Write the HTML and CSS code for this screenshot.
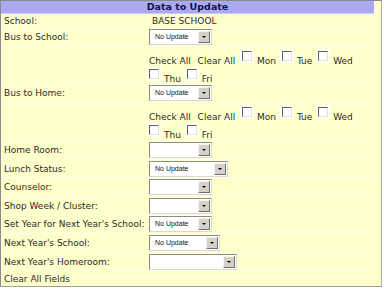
FILE: index.html
```html
<!DOCTYPE html>
<html lang="en">
<head>
  <meta charset="UTF-8">
  <title>Data to Update</title>
  <link rel="stylesheet" href="styles.css">
</head>
<body>
  <div class="panel">
    <table class="update-table">
      <tr class="head-row">
        <th colspan="2">Data to Update</th>
      </tr>
      <tr class="row-short">
        <td class="label">School:</td>
        <td class="value"><span class="plain">BASE SCHOOL</span></td>
      </tr>
      <tr>
        <td class="label">Bus to School:</td>
        <td class="value"><div class="dropdown w63"><span>No Update</span><i class="arrow"></i></div></td>
      </tr>
      <tr class="days-row">
        <td class="label"></td>
        <td class="value">
          <div class="days">
            <span class="link">Check All</span>
            <span class="link">Clear All</span>
            <span class="day"><b class="box"></b>Mon</span>
            <span class="day"><b class="box"></b>Tue</span>
            <span class="day"><b class="box"></b>Wed</span>
            <span class="day"><b class="box"></b>Thu</span>
            <span class="day"><b class="box"></b>Fri</span>
          </div>
        </td>
      </tr>
      <tr>
        <td class="label">Bus to Home:</td>
        <td class="value"><div class="dropdown w63"><span>No Update</span><i class="arrow"></i></div></td>
      </tr>
      <tr class="days-row">
        <td class="label"></td>
        <td class="value">
          <div class="days">
            <span class="link">Check All</span>
            <span class="link">Clear All</span>
            <span class="day"><b class="box"></b>Mon</span>
            <span class="day"><b class="box"></b>Tue</span>
            <span class="day"><b class="box"></b>Wed</span>
            <span class="day"><b class="box"></b>Thu</span>
            <span class="day"><b class="box"></b>Fri</span>
          </div>
        </td>
      </tr>
      <tr>
        <td class="label">Home Room:</td>
        <td class="value"><div class="dropdown w63"><span></span><i class="arrow"></i></div></td>
      </tr>
      <tr>
        <td class="label">Lunch Status:</td>
        <td class="value"><div class="dropdown w79"><span>No Update</span><i class="arrow"></i></div></td>
      </tr>
      <tr>
        <td class="label">Counselor:</td>
        <td class="value"><div class="dropdown w63"><span></span><i class="arrow"></i></div></td>
      </tr>
      <tr>
        <td class="label">Shop Week / Cluster:</td>
        <td class="value"><div class="dropdown w63"><span></span><i class="arrow"></i></div></td>
      </tr>
      <tr>
        <td class="label">Set Year for Next Year's School:</td>
        <td class="value"><div class="dropdown w63"><span>No Update</span><i class="arrow"></i></div></td>
      </tr>
      <tr>
        <td class="label">Next Year's School:</td>
        <td class="value"><div class="dropdown w71"><span>No Update</span><i class="arrow"></i></div></td>
      </tr>
      <tr>
        <td class="label">Next Year's Homeroom:</td>
        <td class="value"><div class="dropdown w88"><span></span><i class="arrow"></i></div></td>
      </tr>
      <tr class="row-last">
        <td class="label" colspan="2">Clear All Fields</td>
      </tr>
    </table>
  </div>
</body>
</html>
```

FILE: styles.css
```css
/* Page */
body {
  margin: 0;
  background-color: #ffffff;
  font-family: "DejaVu Sans", Verdana, sans-serif;
  font-size: 9px;
  color: #2b2b2b;
}

/* Outer panel with grey frame */
.panel {
  width: 380px;
  border: 1px solid #8a8a8a;
  border-right-color: #b0b0b0;
  border-bottom-color: #a0a0a0;
  background-color: #ffffcc;
}

.update-table {
  width: 373px;
  border-collapse: collapse;
}

/* Header */
.head-row th {
  height: 12px;
  padding: 0;
  background-color: #aaaaf2;
  color: #10104a;
  font-weight: bold;
  font-size: 9.5px;
  line-height: 12px;
  text-align: center;
  border-bottom: 1px solid #c8c8f0;
}

/* Rows */
.update-table td {
  height: 17.6px;
  padding: 0;
  line-height: 12px;
  border-bottom: 1px solid #ffffe6;
  vertical-align: middle;
}

.update-table .row-short td {
  height: 13px;
}

.update-table .row-last td {
  height: 15px;
  border-bottom: none;
}

.label {
  width: 145px;
  padding-left: 3px !important;
  white-space: nowrap;
}

.plain {
  padding-left: 3px;
}

/* Fake select box */
.dropdown {
  display: flex;
  align-items: center;
  justify-content: space-between;
  height: 16px;
  box-sizing: border-box;
  border: 1px solid #8c8c8c;
  border-right-color: #d8d8d8;
  border-bottom-color: #d8d8d8;
  background-color: #ffffff;
  font-family: "Liberation Sans", Arial, sans-serif;
  font-size: 7px;
  color: #111111;
}

.dropdown span {
  padding-left: 5px;
}

.dropdown .arrow {
  width: 12px;
  height: 12px;
  margin-right: 1px;
  box-sizing: border-box;
  background-color: #d4d0c8;
  border: 1px solid #f4f4f4;
  border-right-color: #707070;
  border-bottom-color: #707070;
  position: relative;
}

.dropdown .arrow::after {
  content: "";
  position: absolute;
  left: 3px;
  top: 4px;
  border-left: 2px solid transparent;
  border-right: 2px solid transparent;
  border-top: 2px solid #000000;
}

.w63 { width: 63px; }
.w71 { width: 71px; }
.w79 { width: 79px; }
.w88 { width: 88px; }

/* Day checkboxes */
.update-table .days-row td {
  height: 37px;
  vertical-align: top;
}

.days {
  width: 220px;
  height: 32px;
  line-height: 18px;
  padding-top: 5px;
}

.link {
  margin-right: 4px;
}

.day {
  display: inline-block;
  margin-right: 3px;
}

.box {
  display: inline-block;
  width: 8px;
  height: 8px;
  margin-right: 5px;
  vertical-align: top;
  position: relative;
  top: -1px;
  background-color: #ffffff;
  border: 1px solid #606060;
  border-right-color: #e0e0e0;
  border-bottom-color: #e0e0e0;
  box-shadow: 0 0 0 2px #fffff4;
}
```
